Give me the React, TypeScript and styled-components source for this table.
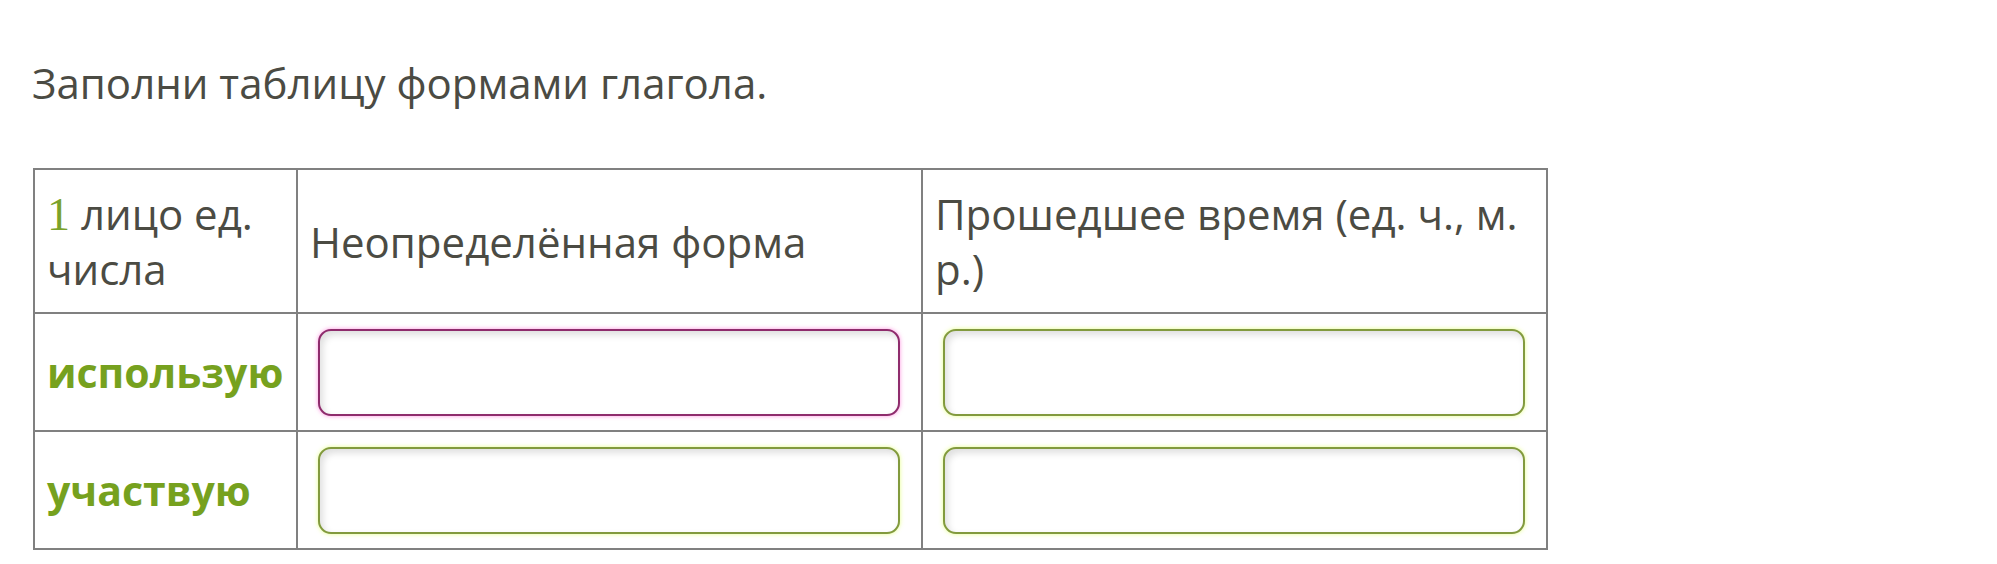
import React from "react";
import styled, {createGlobalStyle} from "styled-components";

const GlobalStyle = createGlobalStyle`
    html, body {
        margin: 0;
        padding: 0;
        background: #ffffff;
    }
    body {
        font-family: "Open Sans", "Noto Sans", sans-serif;
        color: #4b4b43;
    }
`;

const Page = styled.main`
    padding: 54px 0 0 32px;
`;

const Title = styled.p`
    margin: 0 0 57px 0;
    font-size: 42px;
    line-height: 1.362;
`;

const Table = styled.table`
    border-collapse: collapse;
    table-layout: fixed;
    width: 1513px;
    margin-left: 1px;
    font-size: 42px;
    line-height: 55px;
`;

const Cell = styled.td<{ $height: number }>`
    border: 2px solid #808080;
    height: ${({$height}) => $height}px;
    padding: 0 12px;
    vertical-align: middle;
    box-sizing: border-box;
`;

const Number = styled.span`
    font-family: "Liberation Serif", "DejaVu Serif", serif;
    font-size: 46px;
    line-height: 1;
    color: #7aa22a;
`;

const Verb = styled.span`
    font-size: 41px;
    font-weight: 700;
    color: #76a11e;
`;

const AnswerCell = styled(Cell)`
    padding: 0 21px 0 20px;
`;

const Answer = styled.input<{ $tone: "wrong" | "right" }>`
    display: block;
    width: 100%;
    height: 87px;
    box-sizing: border-box;
    border-radius: 13px;
    border: 2px solid ${({$tone}) => $tone === "wrong" ? "#8e2c6c" : "#829a3e"};
    background: #ffffff;
    box-shadow: inset 3px 4px 7px rgba(0, 0, 0, 0.13),
        0 0 4px ${({$tone}) => $tone === "wrong" ? "rgba(255, 60, 200, 0.55)" : "rgba(220, 255, 90, 0.7)"};
    font: inherit;
    outline: none;
`;

const rows = [
    {verb: "использую", tones: ["wrong", "right"] as const, height: 118},
    {verb: "участвую", tones: ["right", "right"] as const, height: 118},
];

export default function App() {
    return (
        <>
            <GlobalStyle/>
            <Page>
                <Title>Заполни таблицу формами глагола.</Title>
                <Table>
                    <colgroup>
                        <col style={{width: 263}}/>
                        <col style={{width: 625}}/>
                        <col style={{width: 625}}/>
                    </colgroup>
                    <tbody>
                    <tr>
                        <Cell $height={144}><Number>1</Number> лицо ед. числа</Cell>
                        <Cell $height={144}>Неопределённая форма</Cell>
                        <Cell $height={144}>Прошедшее время (ед. ч., м. р.)</Cell>
                    </tr>
                    {rows.map((row) => (
                        <tr key={row.verb}>
                            <Cell $height={row.height}><Verb>{row.verb}</Verb></Cell>
                            {row.tones.map((tone, index) => (
                                <AnswerCell key={index} $height={row.height}>
                                    <Answer type="text" $tone={tone}/>
                                </AnswerCell>
                            ))}
                        </tr>
                    ))}
                    </tbody>
                </Table>
            </Page>
        </>
    );
}
